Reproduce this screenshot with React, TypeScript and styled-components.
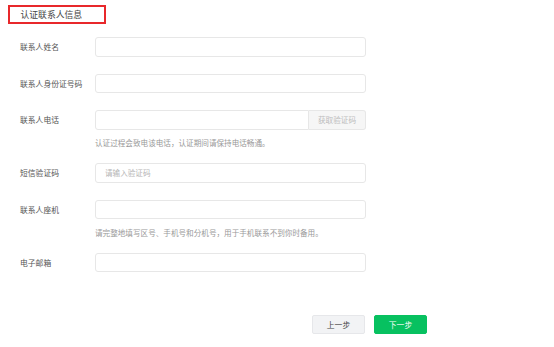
import React from "react";
import styled, { createGlobalStyle } from "styled-components";

const GlobalStyle = createGlobalStyle`
  html, body {
    margin: 0;
    padding: 0;
    background: #fff;
  }
  body {
    font-family: "Noto Sans CJK SC", "Noto Sans", sans-serif;
    color: #333;
  }
`;

interface Field {
  label: string;
  placeholder?: string;
  hint?: string;
  withCode?: boolean;
}

const fields: Field[] = [
  { label: "联系人姓名" },
  { label: "联系人身份证号码" },
  {
    label: "联系人电话",
    withCode: true,
    hint: "认证过程会致电该电话，认证期间请保持电话畅通。",
  },
  { label: "短信验证码", placeholder: "请输入验证码" },
  {
    label: "联系人座机",
    hint: "请完整地填写区号、手机号和分机号，用于手机联系不到你时备用。",
  },
  { label: "电子邮箱" },
];

const App = () => {
  return (
    <Page>
      <GlobalStyle />
      <SectionTitle>认证联系人信息</SectionTitle>
      <Form>
        {fields.map((f) => (
          <FormItem key={f.label}>
            <Label>{f.label}</Label>
            {f.withCode ? (
              <InputGroup>
                <TextInput $attached placeholder={f.placeholder} />
                <CodeButton type="button">获取验证码</CodeButton>
              </InputGroup>
            ) : (
              <TextInput placeholder={f.placeholder} />
            )}
            {f.hint && <Hint>{f.hint}</Hint>}
          </FormItem>
        ))}
      </Form>
      <Footer>
        <StepButton type="button">上一步</StepButton>
        <StepButton type="button" $primary>
          下一步
        </StepButton>
      </Footer>
    </Page>
  );
};

const Page = styled.div`
  width: 554px;
  height: 347px;
  padding-top: 5px;
  box-sizing: border-box;
`;

const SectionTitle = styled.div`
  margin-left: 8px;
  width: 98px;
  height: 19px;
  box-sizing: border-box;
  border: 2px solid #e8282b;
  padding-left: 10.5px;
  font-size: 8.8px;
  line-height: 15px;
  color: #444;
  white-space: nowrap;
`;

const Form = styled.div`
  padding: 13px 0 0 20px;
`;

const FormItem = styled.div`
  display: grid;
  grid-template-columns: 75px 271px;
  align-items: center;
  margin-bottom: 17px;

  &:last-child {
    margin-bottom: 0;
  }
`;

const Label = styled.div`
  font-size: 7.8px;
  color: #555;
  white-space: nowrap;
`;

const InputGroup = styled.div`
  display: flex;
  height: 19.5px;
`;

const TextInput = styled.input<{ $attached?: boolean }>`
  box-sizing: border-box;
  width: 100%;
  min-width: 0;
  height: 19.5px;
  margin: 0;
  padding: 0 9px;
  border: 1px solid #e7e7e7;
  border-radius: ${(p) => (p.$attached ? "3px 0 0 3px" : "3px")};
  background: #fff;
  outline: none;
  font-family: inherit;
  font-size: 7.6px;
  color: #333;

  &::placeholder {
    color: #b5b5b5;
  }
`;

const CodeButton = styled.button`
  flex: 0 0 57px;
  box-sizing: border-box;
  height: 19.5px;
  margin: 0;
  padding: 0;
  border: 1px solid #e7e7e7;
  border-left: none;
  border-radius: 0 3px 3px 0;
  background: #f6f6f6;
  font-family: inherit;
  font-size: 7.6px;
  color: #bdbdbd;
`;

const Hint = styled.div`
  grid-column: 2;
  margin: 8.5px 0 -2px;
  font-size: 7.6px;
  line-height: 10px;
  color: #999;
  white-space: nowrap;
`;

const Footer = styled.div`
  display: flex;
  gap: 9px;
  margin: 43px 0 0 312px;
`;

const StepButton = styled.button<{ $primary?: boolean }>`
  box-sizing: border-box;
  width: 53px;
  height: 19px;
  padding: 0;
  border-radius: 2px;
  border: 1px solid ${(p) => (p.$primary ? "#07c160" : "#e6e7ea")};
  background: ${(p) => (p.$primary ? "#07c160" : "#f2f3f5")};
  color: ${(p) => (p.$primary ? "#fff" : "#444")};
  font-family: inherit;
  font-size: 7.8px;
`;

export default App;
